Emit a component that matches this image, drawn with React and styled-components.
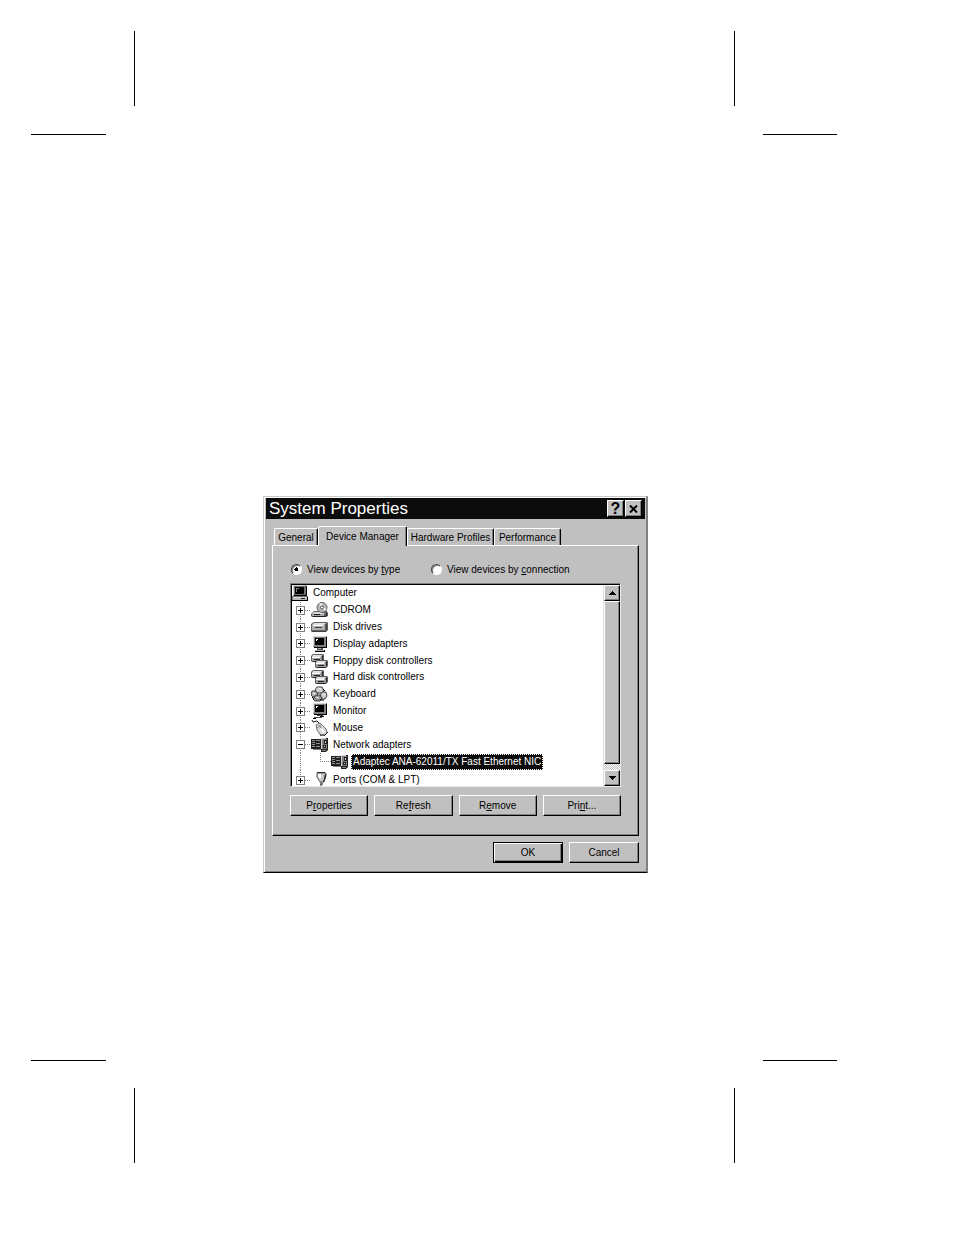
import React, { useState } from 'react';
import styled, { createGlobalStyle, css } from 'styled-components';

const GlobalStyle = createGlobalStyle`
  *, *::before, *::after { box-sizing: border-box; }
  body { margin: 0; background: #fff; }
  body, button, input { font-family: "Liberation Sans", Arial, sans-serif; font-size: 10px; color: #000; }
  button { padding: 0; }
`;

const dots = dir => css`repeating-linear-gradient(${dir}, #808080 0 1px, transparent 1px 2px)`;

/* ---- printed sheet ---- */
const Sheet = styled.div`
  min-height: 100vh;
  padding: 31px 117px 72px 31px;
  display: flex;
  flex-direction: column;
`;
const CropRow = styled.div`
  display: flex;
  justify-content: space-between;
`;
const CropCorner = styled.div`
  display: grid;
  width: ${p => (p.$right ? 103 : 104)}px;
  height: ${p => (p.$bottom ? 103 : 104)}px;
  & > * { grid-area: 1 / 1; background: #000; }
`;
const VerticalMark = styled.span`
  width: 1px;
  height: 75px;
  justify-self: ${p => (p.$right ? 'start' : 'end')};
  align-self: ${p => (p.$bottom ? 'end' : 'start')};
`;
const HorizontalMark = styled.span`
  width: ${p => (p.$right ? 74 : 75)}px;
  height: 1px;
  justify-self: ${p => (p.$right ? 'end' : 'start')};
  align-self: ${p => (p.$bottom ? 'start' : 'end')};
`;
const Main = styled.main`
  flex: 1;
  display: flex;
  justify-content: center;
  align-items: flex-start;
  padding: 361px 0 24px 43px;
`;

/* ---- dialog ---- */
const Dialog = styled.section`
  width: 100%;
  max-width: 385px;
  background: #c0c0c0;
  border-style: solid;
  border-width: 1px 2px 1px 1px;
  border-color: #c8c8c8 #808080 #000 #c8c8c8;
  box-shadow: inset 1px 1px #fff, inset 0 -1px #808080;
  padding: 1px 1px 9px 2px;
`;
const TitleBar = styled.header`
  display: flex;
  align-items: center;
  gap: 1px;
  height: 21px;
  padding: 0 3px;
  background: #0c0c0c;
`;
const Title = styled.h1`
  flex: 1;
  margin: 0;
  font-size: 17px;
  line-height: 20px;
  font-weight: 400;
  color: #fff;
`;
const raised = css`
  background: #c0c0c0;
  border: 1px solid;
  border-color: #fff #000 #000 #fff;
  box-shadow: inset -1px -1px #808080;
`;
const CaptionButton = styled.button`
  ${raised}
  display: grid;
  place-items: center;
  width: 17px;
  height: 17px;
  font-size: 16px;
  line-height: 15px;
  font-weight: 700;
`;
const Body = styled.div`
  padding: 7px 6px 0;
`;
const TabList = styled.div`
  display: flex;
  align-items: flex-end;
  padding-left: 2px;
  height: 19px;
`;
const Tab = styled.button`
  flex: 0 0 ${p => p.$width}px;
  height: ${p => (p.$active ? 20 : 17)}px;
  margin-bottom: ${p => (p.$active ? -1 : 0)}px;
  z-index: ${p => (p.$active ? 1 : 0)};
  line-height: ${p => (p.$active ? 16 : 15)}px;
  white-space: nowrap;
  background: #c0c0c0;
  border: solid;
  border-width: 1px 1px 0 1px;
  border-color: #fff #000 #fff #fff;
  border-radius: 2px 2px 0 0;
  box-shadow: inset -1px 0 #808080;
`;
const Panel = styled.div`
  display: flex;
  flex-direction: column;
  padding: 15px 17px 19px;
  border: 1px solid;
  border-color: #fff #000 #000 #fff;
  box-shadow: inset -1px -1px #808080;
`;
const RadioRow = styled.div`
  display: flex;
  height: 17px;
  padding-left: 1px;
  margin-bottom: 5px;
`;
const RadioOption = styled.label`
  display: flex;
  align-items: center;
  gap: 5px;
  min-width: 140px;
  white-space: nowrap;
`;
const Radio = styled.input`
  appearance: none;
  width: 11px;
  height: 11px;
  margin: 0;
  border: 1px solid;
  border-color: #404040 #fff #fff #404040;
  border-radius: 50%;
  background: #fff;
  box-shadow: inset 1px 1px #808080;
  &:checked {
    background: radial-gradient(circle, #000 0 2px, #fff 2px);
  }
`;
const ListBox = styled.div`
  height: 204px;
  border: 1px solid;
  border-color: #808080 #e8e8e8 #e8e8e8 #808080;
  background: #fff;
`;
const ListInner = styled.div`
  display: flex;
  height: 100%;
  border: solid #000;
  border-width: 1px 0 0 1px;
`;
const TreeView = styled.div`
  flex: 1;
  overflow: hidden;
`;
const Tree = styled.ul`
  list-style: none;
  margin: 0;
  padding: 0;
  height: 206px;
  display: flex;
  flex-direction: column;
`;
const TreeRow = styled.li`
  flex: ${p => (p.$last ? '0 0 21px' : '1 0 0')};
  display: flex;
  align-items: center;
  padding-left: ${p => (p.$root ? 0 : 4)}px;
`;
const Branch = styled.span`
  align-self: stretch;
  width: 9px;
  display: grid;
  align-items: center;
  background: ${dots('to bottom')} 4px 0 / 1px 100% no-repeat;
`;
const Connector = styled.span`
  width: 6px;
  height: 1px;
  background: ${dots('to right')};
`;
const Elbow = styled.span`
  width: 11px;
  height: 9px;
  margin-left: 15px;
  align-self: flex-start;
  background:
    ${dots('to bottom')} 0 0 / 1px 100% no-repeat,
    ${dots('to right')} 0 100% / 100% 1px no-repeat;
`;
const Expander = styled.button`
  display: block;
  width: 9px;
  height: 9px;
  border: 1px solid #808080;
  background:
    linear-gradient(#000, #000) center / 5px 1px no-repeat,
    linear-gradient(#000, #000) center / ${p => (p['aria-expanded'] ? 0 : 1)}px 5px no-repeat,
    #fff;
`;
const Label = styled.span`
  margin-left: ${p => (p.$selected ? 3 : 5)}px;
  white-space: nowrap;
  line-height: 16px;
  ${p => p.$selected && css`
    padding: 0 2px;
    color: #fff;
    background: #0c0c0c;
    outline: 1px dotted #fff;
    outline-offset: -1px;
  `}
`;
const Glyph = styled.svg`
  display: block;
  flex: none;
`;

const ScrollBar = styled.div`
  width: 17px;
  display: flex;
  flex-direction: column;
  border-left: 1px solid #e0e0e0;
  background: repeating-conic-gradient(#c0c0c0 0 25%, #fff 0 50%) 0 0 / 2px 2px;
`;
const ScrollArrow = styled.button`
  ${raised}
  display: grid;
  place-items: center;
  flex: 0 0 16px;
`;
const Thumb = styled.div`
  ${raised}
  height: 163px;
`;
const Spacer = styled.div`
  flex: 1;
`;

const ActionRow = styled.div`
  display: grid;
  grid-template-columns: repeat(4, 1fr);
  gap: 6px;
  margin-top: 8px;
`;
const Footer = styled.footer`
  display: flex;
  justify-content: flex-end;
  gap: 6px;
  margin-top: 6px;
`;
const PushButton = styled.button`
  ${raised}
  height: 21px;
  min-width: 70px;
  line-height: 19px;
  ${p => p.$default && css`
    border-color: #000;
    box-shadow: inset 1px 1px #fff, inset -1px -1px #000, inset -2px -2px #808080;
  `}
`;

/* ---- device icons ---- */
const Screen = ({ x = 0 }) => (
  <g>
    <path fill="#808080" d={`M${x + 1} 0h14v11h-14z`} />
    <path fill="#d8d8d8" d={`M${x + 1} 0h13v1h-12v9h-1z`} />
    <path fill="#000" d={`M${x + 3} 2h9v7h-9zM${x + 14} 1h1v11h-13v-1h12z`} />
    <path fill="#fff" d={`M${x + 4} 3h2v1h-1v1h-1z`} />
  </g>
);
const Drive = ({ x = 0, y = 0 }) => (
  <g transform={`translate(${x} ${y})`}>
    <path fill="#606060" d="M2 0h10l1 1v5l-2 2H1L0 7V2z" />
    <path fill="#e0e0e0" d="M2 1h9l-1 2H1z" />
    <path fill="#a0a0a0" d="M1 3h10v4H1z" />
    <path fill="#fff" d="M1 3h8v1H1z" />
    <path fill="#202020" d="M11 2h1v4h-1zM3 5h6v1H3zM2 7h9v1H2z" />
  </g>
);
const Card = () => (
  <g>
    <path fill="#202020" d="M0 2h10v10H0zM10 1h7v12l-2 2h-5z" />
    <path fill="#909090" d="M1 3h3v1H1zM5 3h4v1H5zM1 5h3v1H1zM5 6h4v1H5zM1 7h3v1H1zM5 9h4v1H5zM1 9h3v1H1z" />
    <path fill="#808080" d="M10 2h6v10h-6zM2 12h8v1H2zM11 13h4v1h-4z" />
    <path fill="#d0d0d0" d="M10 1h5v1h-4v10h-1z" />
    <path fill="#202020" d="M13 3h3v4h-3zM12 8h3v3h-3z" />
    <path fill="#d0d0d0" d="M14 4h1v2h-1zM13 9h1v1h-1z" />
  </g>
);
const drawings = {
  computer: (
    <g>
      <path fill="#707070" d="M1 0h13v11H1zM0 11h16v5H0z" />
      <path fill="#d8d8d8" d="M1 0h12v1H2v9H1zM1 12h14v1H1z" />
      <path fill="#000" d="M3 2h9v7H3zM14 1h1v10h-1zM2 10h13v1H2zM15 12h1v4H0v-1h15z" />
      <path fill="#808080" d="M4 3h3v1H5v3H4z" />
      <path fill="#b8b8b8" d="M1 13h14v2H1z" />
      <path fill="#202020" d="M9 13h4v1H9z" />
    </g>
  ),
  cdrom: (
    <g>
      <path fill="#606060" d="M3 9h13l1 2v3l-2 1H1l-1-1v-2z" />
      <circle cx="11" cy="5.5" r="5" fill="#b8b8b8" stroke="#606060" />
      <path fill="#f4f4f4" d="M11 5.5L8 2l3-1zM11 5.5L14 9l1-3z" />
      <circle cx="11" cy="5.5" r="1.5" fill="#fff" stroke="#505050" />
      <path fill="#d8d8d8" d="M3 10h5l3 1h3l-1 1H1z" />
      <path fill="#a8a8a8" d="M1 12h12v2H1z" />
      <path fill="#202020" d="M3 12h6v1H3zM15 11h1v3h-1zM2 14h13v1H2z" />
    </g>
  ),
  disk: (
    <g>
      <path fill="#606060" d="M3 3h13l1 1v7l-2 2H1l-1-1V5z" />
      <path fill="#e0e0e0" d="M3 4h12l-2 2H1z" />
      <path fill="#b0b0b0" d="M1 6h13v5H1z" />
      <path fill="#404040" d="M4 8h7v1H4zM15 5h1v6h-1zM1 12h14v1H2z" />
      <path fill="#fff" d="M2 6h10v1H2z" />
    </g>
  ),
  display: (
    <g>
      <Screen x={1} />
      <path fill="#505050" d="M6 12h6v2H6z" />
      <path fill="#b0b0b0" d="M7 12h3v1H7zM4 14h9v1H4z" />
      <path fill="#000" d="M4 15h10v1H4zM13 14h1v1h-1z" />
    </g>
  ),
  controller: (
    <g>
      <Drive x={0} y={1} />
      <Drive x={4} y={7} />
    </g>
  ),
  keyboard: (
    <g stroke="#404040">
      <path fill="#d0d0d0" d="M6 1h5l2 4-2 2H6L4 4z" />
      <path fill="#b0b0b0" d="M1 5h4l2 3-2 3H2L0 9z" />
      <path fill="#c8c8c8" d="M11 6h4l1 4-2 3h-4L9 9z" />
      <path fill="#909090" d="M5 9h4l2 3-2 3H4l-2-2z" />
      <path fill="none" stroke="#fff" d="M7 2l3 1M2 7l2 1M12 8l2 1M5 11l3 1" />
      <path fill="none" stroke="#000" d="M12 3l2 2M9 14h4M1 11l2 2" />
    </g>
  ),
  monitor: (
    <g>
      <Screen x={1} />
      <path fill="#505050" d="M6 12h6v1H6zM3 14h8v1H3z" />
      <path fill="#000" d="M9 13h4v1H9zM2 15h3v1H2z" />
    </g>
  ),
  mouse: (
    <g>
      <path fill="none" stroke="#202020" d="M1 0l1 2 4-1 3 3" />
      <path fill="#d8d8d8" stroke="#707070" d="M5 5l4-2 6 6 1 4-3 3h-3L6 10z" />
      <path fill="none" stroke="#808080" d="M6 8l4-3M8 5l2 3" />
      <path fill="#fff" d="M9 8l3 1 2 3-2 1z" />
      <path fill="none" stroke="#202020" d="M9 15h5l3-3" />
    </g>
  ),
  network: <Card />,
  ports: (
    <g>
      <path fill="#c8c8c8" stroke="#606060" d="M6 1h9v3l-2 6H9L6 5z" />
      <path fill="#fff" d="M7 2h3v4H8z" />
      <path fill="#303030" d="M14 2h1v3l-2 5h-1zM6 0h8v1H6z" />
      <path fill="#808080" d="M9 10h3v3H9z" />
      <path fill="none" stroke="#404040" d="M10 12v2l-2 1H5" />
    </g>
  ),
};
const DeviceIcon = ({ name }) => (
  <Glyph
    width={name === 'computer' ? 16 : 17}
    height="16"
    viewBox={name === 'computer' ? '0 0 16 16' : '0 0 17 16'}
    aria-hidden="true"
  >
    {drawings[name]}
  </Glyph>
);
const Arrow = ({ down }) => (
  <Glyph width="7" height="4" viewBox="0 0 7 4" shapeRendering="crispEdges" aria-hidden="true">
    <path d={down ? 'M0 0h7v1H6v1H5v1H4v1H3V3H2V2H1V1H0z' : 'M3 0h1v1h1v1h1v1h1v1H0V3h1V2h1V1h1z'} />
  </Glyph>
);

const devices = [
  ['cdrom', 'CDROM'],
  ['disk', 'Disk drives'],
  ['display', 'Display adapters'],
  ['controller', 'Floppy disk controllers'],
  ['controller', 'Hard disk controllers'],
  ['keyboard', 'Keyboard'],
  ['monitor', 'Monitor'],
  ['mouse', 'Mouse'],
  ['network', 'Network adapters', 'Adaptec ANA-62011/TX Fast Ethernet NIC'],
  ['ports', 'Ports (COM & LPT)'],
];
const tabs = [
  ['General', 44],
  ['Device Manager', 89],
  ['Hardware Profiles', 87],
  ['Performance', 67],
];

function Corners({ bottom }) {
  return (
    <CropRow aria-hidden="true">
      {[false, true].map(right => (
        <CropCorner key={String(right)} $right={right} $bottom={bottom}>
          <VerticalMark $right={right} $bottom={bottom} />
          <HorizontalMark $right={right} $bottom={bottom} />
        </CropCorner>
      ))}
    </CropRow>
  );
}

function DeviceTree() {
  return (
    <TreeView>
      <Tree>
        <TreeRow $root>
          <DeviceIcon name="computer" />
          <Label>Computer</Label>
        </TreeRow>
        {devices.map(([icon, text, child], i) => (
          <React.Fragment key={text}>
            <TreeRow $last={i === devices.length - 1}>
              <Branch>
                <Expander type="button" aria-label={text} aria-expanded={Boolean(child)} />
              </Branch>
              <Connector />
              <DeviceIcon name={icon} />
              <Label>{text}</Label>
            </TreeRow>
            {child && (
              <TreeRow>
                <Branch />
                <Elbow />
                <DeviceIcon name={icon} />
                <Label $selected>{child}</Label>
              </TreeRow>
            )}
          </React.Fragment>
        ))}
      </Tree>
    </TreeView>
  );
}

export default function App() {
  const [view, setView] = useState('type');
  return (
    <Sheet>
      <GlobalStyle />
      <Corners />
      <Main>
        <Dialog role="dialog" aria-labelledby="dialog-title">
          <TitleBar>
            <Title id="dialog-title">System Properties</Title>
            <CaptionButton type="button" aria-label="Help">?</CaptionButton>
            <CaptionButton type="button" aria-label="Close">
              <Glyph width="9" height="8" viewBox="0 0 9 8" aria-hidden="true">
                <path d="M1 0.5l7 7M8 0.5l-7 7" stroke="#000" strokeWidth="2" />
              </Glyph>
            </CaptionButton>
          </TitleBar>
          <Body>
            <TabList role="tablist">
              {tabs.map(([text, width], i) => (
                <Tab key={text} type="button" role="tab" aria-selected={i === 1} $active={i === 1} $width={width}>
                  {text}
                </Tab>
              ))}
            </TabList>
            <Panel role="tabpanel">
              <RadioRow>
                <RadioOption>
                  <Radio type="radio" name="view" checked={view === 'type'} onChange={() => setView('type')} />
                  <span>View devices by <u>t</u>ype</span>
                </RadioOption>
                <RadioOption>
                  <Radio type="radio" name="view" checked={view === 'connection'} onChange={() => setView('connection')} />
                  <span>View devices by <u>c</u>onnection</span>
                </RadioOption>
              </RadioRow>
              <ListBox>
                <ListInner>
                  <DeviceTree />
                  <ScrollBar>
                    <ScrollArrow type="button" aria-label="Scroll up"><Arrow /></ScrollArrow>
                    <Thumb />
                    <Spacer />
                    <ScrollArrow type="button" aria-label="Scroll down"><Arrow down /></ScrollArrow>
                  </ScrollBar>
                </ListInner>
              </ListBox>
              <ActionRow>
                <PushButton type="button">P<u>r</u>operties</PushButton>
                <PushButton type="button">Re<u>f</u>resh</PushButton>
                <PushButton type="button">R<u>e</u>move</PushButton>
                <PushButton type="button">Pri<u>n</u>t...</PushButton>
              </ActionRow>
            </Panel>
            <Footer>
              <PushButton type="button" $default>OK</PushButton>
              <PushButton type="button">Cancel</PushButton>
            </Footer>
          </Body>
        </Dialog>
      </Main>
      <Corners bottom />
    </Sheet>
  );
}
